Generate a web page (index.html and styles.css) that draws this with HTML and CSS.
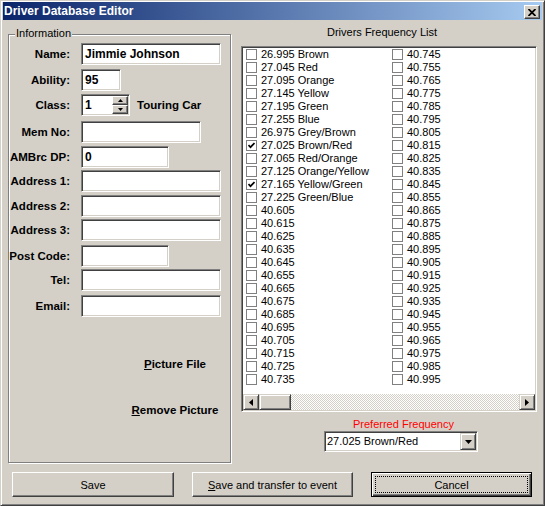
FILE: index.html
```html
<!DOCTYPE html>
<html>
<head>
<meta charset="utf-8">
<title>Driver Database Editor</title>
<link rel="stylesheet" href="styles.css">
</head>
<body>
<div class="window">
  <div class="titlebar">
    <span class="title">Driver Database Editor</span>
    <span class="close"><svg width="8" height="7" viewBox="0 0 8 7"><path d="M0.5 0 L7.5 7 M7.5 0 L0.5 7" stroke="#000" stroke-width="1.8" fill="none"/></svg></span>
  </div>
  <div class="client">
    <div class="main">
      <div class="group">
        <span class="legend">Information</span>
        <div class="form">
          <label class="lbl">Name:</label><div class="field w140">Jimmie Johnson</div>
          <label class="lbl">Ability:</label><div class="field w40">95</div>
          <label class="lbl">Class:</label>
          <div class="class-row">
            <div class="field spinfield w49"><span>1</span>
              <span class="spin">
                <span class="spin-btn"><svg width="5" height="3" viewBox="0 0 5 3"><polygon points="0,3 2.5,0 5,3" fill="#000"/></svg></span>
                <span class="spin-btn"><svg width="5" height="3" viewBox="0 0 5 3"><polygon points="0,0 5,0 2.5,3" fill="#000"/></svg></span>
              </span>
            </div>
            <span class="class-name">Touring Car</span>
          </div>
          <label class="lbl">Mem No:</label><div class="field w120"></div>
          <label class="lbl">AMBrc DP:</label><div class="field w88">0</div>
          <label class="lbl">Address 1:</label><div class="field w140"></div>
          <label class="lbl">Address 2:</label><div class="field w140"></div>
          <label class="lbl">Address 3:</label><div class="field w140"></div>
          <label class="lbl">Post Code:</label><div class="field w88"></div>
          <label class="lbl">Tel:</label><div class="field w140"></div>
          <label class="lbl">Email:</label><div class="field w140"></div>
        </div>
        <div class="pic">
          <span class="pic-file"><u>P</u>icture File</span>
          <span class="pic-remove"><u>R</u>emove Picture</span>
        </div>
      </div>
      <div class="freq">
        <div class="freq-title">Drivers Frequency List</div>
        <div class="listbox">
          <div class="items">
            <div class="item"><span class="cb"></span>26.995 Brown</div>
            <div class="item"><span class="cb"></span>27.045 Red</div>
            <div class="item"><span class="cb"></span>27.095 Orange</div>
            <div class="item"><span class="cb"></span>27.145 Yellow</div>
            <div class="item"><span class="cb"></span>27.195 Green</div>
            <div class="item"><span class="cb"></span>27.255 Blue</div>
            <div class="item"><span class="cb"></span>26.975 Grey/Brown</div>
            <div class="item"><span class="cb"><svg width="7" height="7" viewBox="0 0 7 7"><path d="M0.5 3 L2.5 5.2 L6.5 1" stroke="#000" stroke-width="1.7" fill="none"/></svg></span>27.025 Brown/Red</div>
            <div class="item"><span class="cb"></span>27.065 Red/Orange</div>
            <div class="item"><span class="cb"></span>27.125 Orange/Yellow</div>
            <div class="item"><span class="cb"><svg width="7" height="7" viewBox="0 0 7 7"><path d="M0.5 3 L2.5 5.2 L6.5 1" stroke="#000" stroke-width="1.7" fill="none"/></svg></span>27.165 Yellow/Green</div>
            <div class="item"><span class="cb"></span>27.225 Green/Blue</div>
            <div class="item"><span class="cb"></span>40.605</div>
            <div class="item"><span class="cb"></span>40.615</div>
            <div class="item"><span class="cb"></span>40.625</div>
            <div class="item"><span class="cb"></span>40.635</div>
            <div class="item"><span class="cb"></span>40.645</div>
            <div class="item"><span class="cb"></span>40.655</div>
            <div class="item"><span class="cb"></span>40.665</div>
            <div class="item"><span class="cb"></span>40.675</div>
            <div class="item"><span class="cb"></span>40.685</div>
            <div class="item"><span class="cb"></span>40.695</div>
            <div class="item"><span class="cb"></span>40.705</div>
            <div class="item"><span class="cb"></span>40.715</div>
            <div class="item"><span class="cb"></span>40.725</div>
            <div class="item"><span class="cb"></span>40.735</div>
            <div class="item"><span class="cb"></span>40.745</div>
            <div class="item"><span class="cb"></span>40.755</div>
            <div class="item"><span class="cb"></span>40.765</div>
            <div class="item"><span class="cb"></span>40.775</div>
            <div class="item"><span class="cb"></span>40.785</div>
            <div class="item"><span class="cb"></span>40.795</div>
            <div class="item"><span class="cb"></span>40.805</div>
            <div class="item"><span class="cb"></span>40.815</div>
            <div class="item"><span class="cb"></span>40.825</div>
            <div class="item"><span class="cb"></span>40.835</div>
            <div class="item"><span class="cb"></span>40.845</div>
            <div class="item"><span class="cb"></span>40.855</div>
            <div class="item"><span class="cb"></span>40.865</div>
            <div class="item"><span class="cb"></span>40.875</div>
            <div class="item"><span class="cb"></span>40.885</div>
            <div class="item"><span class="cb"></span>40.895</div>
            <div class="item"><span class="cb"></span>40.905</div>
            <div class="item"><span class="cb"></span>40.915</div>
            <div class="item"><span class="cb"></span>40.925</div>
            <div class="item"><span class="cb"></span>40.935</div>
            <div class="item"><span class="cb"></span>40.945</div>
            <div class="item"><span class="cb"></span>40.955</div>
            <div class="item"><span class="cb"></span>40.965</div>
            <div class="item"><span class="cb"></span>40.975</div>
            <div class="item"><span class="cb"></span>40.985</div>
            <div class="item"><span class="cb"></span>40.995</div>
          </div>
          <div class="hscroll">
            <span class="sb-btn"><svg width="4" height="7" viewBox="0 0 4 7"><polygon points="4,0 4,7 0,3.5" fill="#000"/></svg></span>
            <span class="sb-thumb"></span>
            <span class="sb-track"></span>
            <span class="sb-btn"><svg width="4" height="7" viewBox="0 0 4 7"><polygon points="0,0 0,7 4,3.5" fill="#000"/></svg></span>
          </div>
        </div>
        <div class="pref">Preferred Frequency</div>
        <div class="combo">
          <span class="combo-text">27.025 Brown/Red</span>
          <span class="combo-btn"><svg width="7" height="4" viewBox="0 0 7 4"><polygon points="0,0 7,0 3.5,4" fill="#000"/></svg></span>
        </div>
      </div>
    </div>
    <div class="actions">
      <div class="btn btn-save">Save</div>
      <div class="btn"><span><u>S</u>ave and transfer to event</span></div>
      <div class="btn btn-default">Cancel</div>
    </div>
  </div>
</div>
</body>
</html>
```
FILE: styles.css
```css
* { box-sizing: border-box; }
html, body { margin: 0; padding: 0; }
body {
  font-family: "Liberation Sans", Arial, sans-serif;
  font-size: 11px;
  color: #000;
  background: #d4d0c8;
}

.window {
  width: 545px;
  height: 506px;
  background: #d4d0c8;
  border: 1px solid;
  border-color: #d4d0c8 #404040 #404040 #d4d0c8;
  box-shadow: inset 1px 1px #fff, inset -1px -1px #808080;
  padding: 1px 2px 2px 2px;
  display: flex;
  flex-direction: column;
}

/* Title bar */
.titlebar {
  height: 18px;
  flex: none;
  background: linear-gradient(to right, #0a246a, #a6caf0);
  display: flex;
  justify-content: space-between;
  align-items: center;
  padding: 0 2px 0 1px;
}
.title {
  color: #fff;
  font-weight: bold;
  font-size: 12px;
  line-height: 18px;
}
.close {
  align-self: flex-start;
  margin-top: 3px;
  width: 16px;
  height: 14px;
  background: #d4d0c8;
  border: 1px solid;
  border-color: #fff #404040 #404040 #fff;
  box-shadow: inset -1px -1px #808080;
  display: flex;
  align-items: center;
  justify-content: center;
}
.close svg { display: block; }

.client {
  flex: 1;
  display: flex;
  flex-direction: column;
}
.main {
  display: flex;
  align-items: flex-start;
}

/* Information group */
.group {
  position: relative;
  margin: 14px 0 0 5px;
  width: 223px;
  height: 429px;
  border: 1px solid #808080;
  box-shadow: 1px 1px #fff, inset 1px 1px #fff;
  padding-top: 8px;
  flex: none;
}
.legend {
  position: absolute;
  top: -8px;
  left: 6px;
  padding: 0 1px;
  background: #d4d0c8;
  line-height: 13px;
}
.form {
  display: grid;
  grid-template-columns: 61px auto;
  grid-template-rows: 26px 25px 27px 25px 24px 25px 24px 26px 24px 26px 22px;
  column-gap: 11px;
  align-items: start;
}
.lbl {
  font-weight: bold;
  font-size: 11.5px;
  line-height: 22px;
  text-align: right;
  white-space: nowrap;
}
.field {
  height: 22px;
  background: #fff;
  border: 1px solid;
  border-color: #808080 #fff #fff #808080;
  box-shadow: inset 1px 1px #404040, inset -1px -1px #d4d0c8;
  padding: 0 0 0 3px;
  font-weight: bold;
  font-size: 12px;
  line-height: 20px;
  white-space: nowrap;
}
.w140 { width: 140px; }
.w120 { width: 120px; }
.w88 { width: 88px; }
.w49 { width: 49px; }
.w40 { width: 40px; }

.class-row {
  display: flex;
  align-items: center;
}
.spinfield {
  display: flex;
  justify-content: space-between;
  padding: 1px 1px 1px 3px;
  line-height: 18px;
}
.spin {
  display: flex;
  flex-direction: column;
  width: 16px;
}
.spin-btn {
  height: 9px;
  background: #d4d0c8;
  border: 1px solid;
  border-color: #fff #404040 #404040 #fff;
  box-shadow: inset -1px -1px #808080;
  display: flex;
  align-items: center;
  justify-content: center;
}
.spin-btn svg { display: block; }
.class-name {
  margin-left: 7px;
  font-weight: bold;
  font-size: 11.5px;
}

.pic {
  margin-left: 116px;
  width: 100px;
  display: flex;
  flex-direction: column;
  align-items: center;
  font-weight: bold;
  font-size: 11.5px;
  line-height: 13px;
}
.pic-file { margin-top: 41px; }
.pic-remove { margin-top: 33px; }

/* Frequency column */
.freq {
  margin-left: 10px;
  width: 296px;
  display: flex;
  flex-direction: column;
  align-items: flex-start;
}
.freq-title {
  margin: 6px 0 0 86px;
  line-height: 13px;
}
.listbox {
  margin-top: 7px;
  width: 296px;
  height: 366px;
  background: #fff;
  border: 1px solid;
  border-color: #808080 #fff #fff #808080;
  box-shadow: inset 1px 1px #404040, inset -1px -1px #d4d0c8;
  padding: 1px;
  display: flex;
  flex-direction: column;
}
.items {
  flex: 1;
  display: grid;
  grid-template-rows: repeat(26, 13px);
  grid-auto-flow: column;
  grid-auto-columns: 146px;
  padding-left: 3px;
  overflow: hidden;
}
.item {
  display: flex;
  align-items: center;
  white-space: nowrap;
  line-height: 13px;
}
.cb {
  width: 11px;
  height: 11px;
  flex: none;
  border: 1px solid #808080;
  background: #fff;
  margin-right: 4px;
  display: flex;
  align-items: center;
  justify-content: center;
}
.cb svg { display: block; }

.hscroll {
  height: 16px;
  flex: none;
  display: flex;
}
.sb-btn, .sb-thumb {
  height: 16px;
  background: #d4d0c8;
  border: 1px solid;
  border-color: #d4d0c8 #404040 #404040 #d4d0c8;
  box-shadow: inset 1px 1px #fff, inset -1px -1px #808080;
}
.sb-btn {
  width: 16px;
  display: flex;
  align-items: center;
  justify-content: center;
}
.sb-btn svg { display: block; }
.sb-thumb { width: 32px; }
.sb-track {
  flex: 1;
  background: repeating-conic-gradient(#d4d0c8 0 25%, #fff 0 50%) 0 0 / 2px 2px;
}

.pref {
  color: #ff0000;
  margin: 6px 0 0 112px;
  line-height: 13px;
}
.combo {
  margin-left: 83px;
  width: 154px;
  height: 21px;
  background: #fff;
  border: 1px solid;
  border-color: #808080 #fff #fff #808080;
  box-shadow: inset 1px 1px #404040, inset -1px -1px #d4d0c8;
  padding: 1px;
  display: flex;
}
.combo-text {
  flex: 1;
  padding-left: 1px;
  line-height: 17px;
  white-space: nowrap;
}
.combo-btn {
  width: 16px;
  height: 17px;
  background: #d4d0c8;
  border: 1px solid;
  border-color: #d4d0c8 #404040 #404040 #d4d0c8;
  box-shadow: inset 1px 1px #fff, inset -1px -1px #808080;
  display: flex;
  align-items: center;
  justify-content: center;
}
.combo-btn svg { display: block; }

/* Bottom buttons */
.actions {
  display: flex;
  margin-top: 9px;
  padding-left: 9px;
}
.btn {
  width: 161px;
  height: 25px;
  background: #d4d0c8;
  border: 1px solid;
  border-color: #fff #404040 #404040 #fff;
  box-shadow: inset -1px -1px #808080;
  display: flex;
  align-items: center;
  justify-content: center;
  white-space: nowrap;
}
.btn + .btn { margin-left: 18px; }
.btn-save { width: 162px; }
.btn-default {
  position: relative;
  border: 1px solid #000;
  box-shadow: inset 1px 1px #fff, inset -1px -1px #404040, inset -2px -2px #808080;
}
.btn-default::after {
  content: "";
  position: absolute;
  inset: 3px;
  border: 1px dotted #000;
}
```
